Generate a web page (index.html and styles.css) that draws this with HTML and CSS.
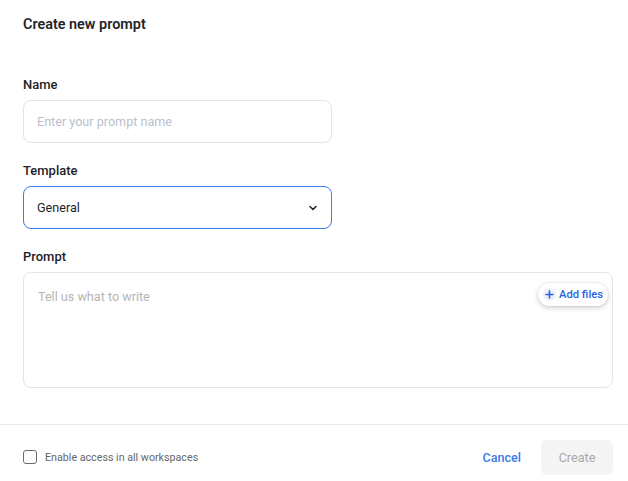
FILE: index.html
```html
<!DOCTYPE html>
<html>
<head>
<meta charset="utf-8">
<link rel="stylesheet" href="styles.css">
</head>
<body>
<div class="dialog">
  <div class="body">
    <h1 class="title">Create new prompt</h1>
    <div class="field name-field">
      <label class="label">Name</label>
      <div class="input placeholder">Enter your prompt name</div>
    </div>
    <div class="field">
      <label class="label">Template</label>
      <div class="input select">
        <span>General</span>
        <svg width="12" height="12" viewBox="0 0 12 12"><path d="M3 4.5 L6 7.5 L9 4.5" fill="none" stroke="#1f2328" stroke-width="1.5" stroke-linecap="round" stroke-linejoin="round"/></svg>
      </div>
    </div>
    <div class="field">
      <label class="label">Prompt</label>
      <div class="textarea">
        <span class="ta-placeholder">Tell us what to write</span>
        <button class="add-files">
          <span class="plus"><svg width="9" height="9" viewBox="0 0 10 10"><path d="M5 1.2V8.8M1.2 5H8.8" stroke="#2563eb" stroke-width="1.8" stroke-linecap="round"/></svg></span>
          Add files
        </button>
      </div>
    </div>
  </div>
  <div class="footer">
    <label class="check"><span class="box"></span>Enable access in all workspaces</label>
    <div class="actions">
      <button class="cancel">Cancel</button>
      <button class="create">Create</button>
    </div>
  </div>
</div>
</body>
</html>
```
FILE: styles.css
```css
* { box-sizing: border-box; }
html, body { margin: 0; padding: 0; background: #fff; }
body { font-family: Roboto, "Liberation Sans", sans-serif; color: #1f2328; }
.dialog { width: 628px; height: 481px; display: flex; flex-direction: column; }
.body { padding: 16px 15px 0 23px; flex: 1; }
.title { margin: 0; font-size: 14.4px; font-weight: 600; line-height: 18px; color: #1f2328; }
.field { display: flex; flex-direction: column; margin-top: 20px; }
.name-field { margin-top: 43px; }
.label { font-size: 13px; font-weight: 500; line-height: 16px; margin-bottom: 7px; color: #1f2328; }
.input { width: 309px; height: 43px; border: 1px solid #e3e4e8; border-radius: 8px; padding: 0 13px; display: flex; align-items: center; font-size: 12.6px; }
.placeholder { color: #b9bfcf; }
.select { border-color: #3b7cf0; justify-content: space-between; padding-right: 12px; color: #1f2328; }
.select svg { display: block; }
.textarea { position: relative; width: 590px; height: 116px; border: 1px solid #e3e4e8; border-radius: 8px; padding: 16px 14px; font-size: 12.6px; }
.ta-placeholder { color: #b5b5b5; }
.add-files { position: absolute; top: 10px; right: 4px; height: 23px; padding: 0 5px; border: none; border-radius: 12px; background: #fff; box-shadow: 0 2px 5px rgba(0,0,0,0.18), 0 0 0 1px rgba(0,0,0,0.04); display: flex; align-items: center; gap: 3px; font-family: inherit; font-size: 11.2px; font-weight: 500; color: #2563eb; }
.plus { width: 13px; height: 13px; border-radius: 50%; background: #eef0f4; display: flex; align-items: center; justify-content: center; }
.plus svg { display: block; }
.footer { height: 57px; border-top: 1px solid #e8e8e8; display: flex; align-items: center; justify-content: space-between; padding: 8px 15px 0 23px; }
.check { display: flex; align-items: center; gap: 8px; font-size: 10.7px; color: #666; }
.box { width: 14px; height: 14px; border: 1px solid #6b6b6b; border-radius: 3px; }
.actions { display: flex; align-items: center; gap: 20px; }
.cancel { border: none; background: none; font-family: inherit; font-size: 12.6px; font-weight: 500; color: #3b7be6; padding: 0; }
.create { border: none; background: #f4f4f4; width: 72px; height: 35px; border-radius: 6px; font-family: inherit; font-size: 12.6px; color: #a8a8a8; }
```
